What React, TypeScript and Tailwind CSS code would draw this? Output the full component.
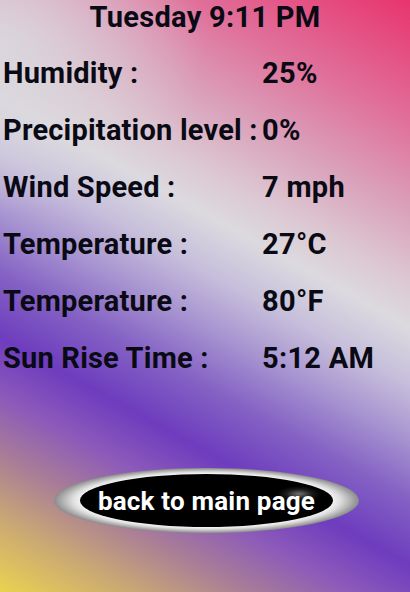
import React from "react";

const rows: [string, string][] = [
  ["Humidity :", "25%"],
  ["Precipitation level :", "0%"],
  ["Wind Speed :", "7 mph"],
  ["Temperature :", "27°C"],
  ["Temperature :", "80°F"],
  ["Sun Rise Time :", "5:12 AM"],
];

export default function App() {
  return (
    <div
      className="w-[410px] h-[592px] overflow-hidden flex flex-col text-[#0a0a14] bg-[radial-gradient(ellipse_50%_28%_at_0%_8%,rgba(218,216,222,0.9)_0%,rgba(218,216,222,0)_100%),linear-gradient(29deg,#ead250_0%,#caa874_9%,#a87c98_17%,#8c5aba_24%,#6e3cbe_31%,#8462c4_39%,#a692d0_46%,#c6bedb_53%,#dcdadf_60%,#dcc6d1_66%,#daa2bb_74%,#e0709a_85%,#e8346e_100%)]"
      style={{ fontFamily: "Roboto, 'Noto Sans', sans-serif" }}
    >
      <div className="text-center text-[29px] leading-[34px] font-bold tracking-[0.3px]">
        Tuesday 9:11 PM
      </div>
      <div className="mt-[11px] grid grid-cols-[259px_1fr] pl-[3px]">
        {rows.map(([k, v], i) => (
          <React.Fragment key={i}>
            <div className="text-[29px] leading-[57px] font-bold whitespace-nowrap tracking-[0.2px]">{k}</div>
            <div className="text-[29px] leading-[57px] font-bold whitespace-nowrap tracking-[0.3px]">{v}</div>
          </React.Fragment>
        ))}
      </div>
      <div className="mt-[81px] flex justify-center pl-[3px]">
        <div className="w-[305px] h-[65px] rounded-[50%] flex items-center justify-center bg-[radial-gradient(closest-side,#ffffff_80%,#dcdcdc_88%,#8a8a8a_100%)]">
          <div className="relative w-[253px] h-[53px] rounded-[50%] bg-black flex items-center justify-center overflow-hidden">
            <div className="absolute right-[12px] top-[12px] w-[44px] h-[16px] rounded-[50%] bg-[radial-gradient(closest-side,rgba(150,150,150,0.75)_0%,rgba(70,70,70,0.35)_60%,rgba(0,0,0,0)_100%)]" />
            <span className="relative text-white text-[26px] font-bold leading-none tracking-[0.2px]">
              back to main page
            </span>
          </div>
        </div>
      </div>
    </div>
  );
}
